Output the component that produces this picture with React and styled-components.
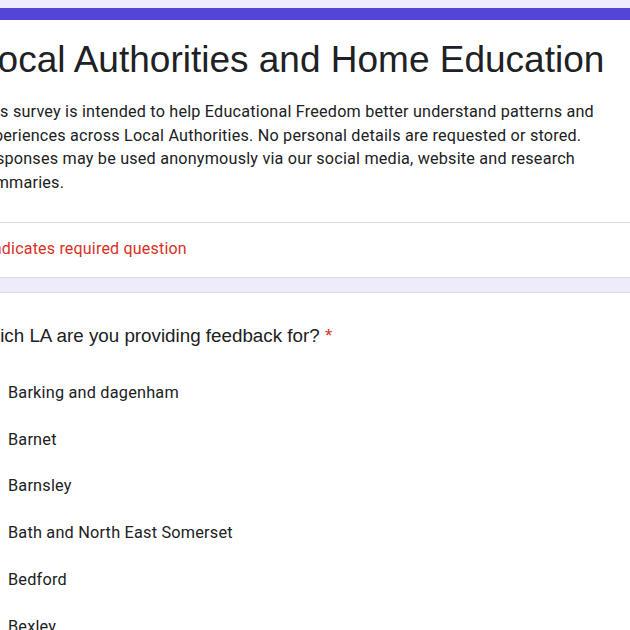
import styled, { createGlobalStyle } from "styled-components";

const GlobalStyle = createGlobalStyle`
  html, body {
    margin: 0;
    padding: 0;
    overflow: hidden;
    background: #eeebfc;
  }
`;

const options = [
  "Barking and dagenham",
  "Barnet",
  "Barnsley",
  "Bath and North East Somerset",
  "Bedford",
  "Bexley",
  "Birmingham",
];

export default function App() {
  return (
    <>
      <GlobalStyle />
      <Page>
        <HeaderCard>
          <TopBar />
          <HeaderBody>
            <Title>Local Authorities and Home Education</Title>
            <Description>
              This survey is intended to help Educational Freedom better understand patterns and
              experiences across Local Authorities. No personal details are requested or stored.
              Responses may be used anonymously via our social media, website and research
              summaries.
            </Description>
          </HeaderBody>
          <RequiredNote>* Indicates required question</RequiredNote>
        </HeaderCard>

        <QuestionCard>
          <QuestionTitle>
            Which LA are you providing feedback for? <Star>*</Star>
          </QuestionTitle>
          <OptionList>
            {options.map((name) => (
              <Option key={name}>
                <RadioBox>
                  <Radio />
                </RadioBox>
                <OptionLabel>{name}</OptionLabel>
              </Option>
            ))}
          </OptionList>
        </QuestionCard>
      </Page>
    </>
  );
}

const Page = styled.div`
  display: flex;
  flex-direction: column;
  gap: 14px;
  padding-top: 8px;
  margin-left: -50px;
  width: 760px;
`;

const Card = styled.div`
  background: #fff;
  border: 1px solid #dadce0;
  border-radius: 9px;
`;

const HeaderCard = styled(Card)`
  border-top: none;
  overflow: hidden;
`;

const TopBar = styled.div`
  height: 12px;
  background: #5245d8;
`;

const HeaderBody = styled.div`
  padding: 18px 26px 27px;
  border-bottom: 1px solid #dadce0;
`;

const Title = styled.h1`
  margin: 0;
  font-family: "Liberation Sans", Arial, sans-serif;
  font-weight: 400;
  font-size: 37px;
  line-height: 44px;
  color: #202124;
`;

const Description = styled.p`
  margin: 18px 0 0;
  width: 630px;
  font-family: Roboto, "Noto Sans", sans-serif;
  font-size: 16.2px;
  line-height: 23.7px;
  letter-spacing: 0.2px;
  color: #202124;
`;

const RequiredNote = styled.div`
  padding: 16px 26px 18px;
  font-family: Roboto, "Noto Sans", sans-serif;
  font-size: 16px;
  line-height: 20px;
  letter-spacing: 0.2px;
  color: #d93025;
`;

const QuestionCard = styled(Card)`
  padding: 31px 26px 0 21px;
`;

const QuestionTitle = styled.div`
  font-family: "Liberation Sans", Arial, sans-serif;
  font-size: 18.8px;
  line-height: 24px;
  color: #202124;
`;

const Star = styled.span`
  color: #d93025;
`;

const OptionList = styled.div`
  display: flex;
  flex-direction: column;
  margin-top: 21px;
`;

const Option = styled.div`
  display: flex;
  align-items: center;
  gap: 6px;
  height: 46.8px;
`;

const RadioBox = styled.span`
  flex: none;
  width: 30px;
  height: 30px;
  display: flex;
  align-items: center;
  justify-content: center;
`;

const Radio = styled.span`
  box-sizing: border-box;
  width: 22px;
  height: 22px;
  border: 2px solid #5f6368;
  border-radius: 50%;
`;

const OptionLabel = styled.span`
  font-family: Roboto, "Noto Sans", sans-serif;
  font-size: 16.3px;
  letter-spacing: 0.2px;
  color: #202124;
`;
